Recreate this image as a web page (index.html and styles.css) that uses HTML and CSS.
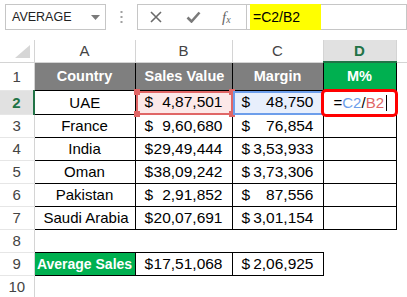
FILE: index.html
```html
<!DOCTYPE html>
<html lang="en">
<head>
    <meta charset="UTF-8">
    <title>AVERAGE - Margin</title>
    <link rel="stylesheet" href="styles.css">
</head>
<body>
    <div class="formula-bar">
        <div class="name-box">
            <span>AVERAGE</span>
            <svg width="9" height="5" viewBox="0 0 9 5"><path d="M0 0h9L4.5 5z" fill="#7a7a7a"/></svg>
        </div>
        <div class="grip">
            <svg width="3" height="12" viewBox="0 0 3 12">
                <rect x="0.5" y="0" width="2" height="2" fill="#a0a0a0"/>
                <rect x="0.5" y="5" width="2" height="2" fill="#a0a0a0"/>
                <rect x="0.5" y="10" width="2" height="2" fill="#a0a0a0"/>
            </svg>
        </div>
        <div class="fx-buttons">
            <svg class="btn-cancel" width="12" height="12" viewBox="0 0 12 12">
                <path d="M1 1l10 10M11 1L1 11" stroke="#6a6a6a" stroke-width="1.6"/>
            </svg>
            <svg class="btn-enter" width="15" height="12" viewBox="0 0 15 12">
                <path d="M1.5 6.5l4 4L13.5 1.5" stroke="#7a7a7a" stroke-width="2.6" fill="none"/>
            </svg>
            <span class="btn-fx"><i>f</i><sub>x</sub></span>
        </div>
        <div class="formula-input">
            <span class="formula">=C2/B2</span>
        </div>
    </div>

    <table class="sheet">
        <colgroup>
            <col class="w-row"><col class="w-a"><col class="w-b"><col class="w-c"><col class="w-d"><col class="w-e">
        </colgroup>
        <thead>
            <tr class="h-head">
                <th class="corner">
                    <svg width="16" height="13" viewBox="0 0 16 13"><path d="M0 13h15V0z" fill="#d6d6d6"/></svg>
                </th>
                <th class="col">A</th>
                <th class="col">B</th>
                <th class="col">C</th>
                <th class="col active">D</th>
                <th class="col"></th>
            </tr>
        </thead>
        <tbody>
            <tr class="h-1">
                <th class="row">1</th>
                <td class="title">Country</td>
                <td class="title">Sales Value</td>
                <td class="title">Margin</td>
                <td class="title green">M%</td>
                <td></td>
            </tr>
            <tr class="h-2">
                <th class="row active">2</th>
                <td class="b center">UAE</td>
                <td class="b ref-red">
                    <div class="acc"><span>$</span><span>4,87,501</span></div>
                    <div class="ref-box red">
                        <span class="handle tl"></span><span class="handle tr"></span>
                        <span class="handle bl"></span><span class="handle br"></span>
                    </div>
                </td>
                <td class="b ref-blue">
                    <div class="acc"><span>$</span><span>48,750</span></div>
                    <div class="ref-box blue"></div>
                </td>
                <td class="b editing">
                    =<span class="c-blue">C2</span>/<span class="c-red">B2</span><span class="caret"></span>
                    <div class="edit-box"></div>
                </td>
                <td></td>
            </tr>
            <tr>
                <th class="row">3</th>
                <td class="b center">France</td>
                <td class="b"><div class="acc"><span>$</span><span>9,60,680</span></div></td>
                <td class="b"><div class="acc"><span>$</span><span>76,854</span></div></td>
                <td class="b"></td>
                <td></td>
            </tr>
            <tr>
                <th class="row">4</th>
                <td class="b center">India</td>
                <td class="b"><div class="acc"><span>$</span><span>29,49,444</span></div></td>
                <td class="b"><div class="acc"><span>$</span><span>3,53,933</span></div></td>
                <td class="b"></td>
                <td></td>
            </tr>
            <tr>
                <th class="row">5</th>
                <td class="b center">Oman</td>
                <td class="b"><div class="acc"><span>$</span><span>38,09,242</span></div></td>
                <td class="b"><div class="acc"><span>$</span><span>3,73,306</span></div></td>
                <td class="b"></td>
                <td></td>
            </tr>
            <tr>
                <th class="row">6</th>
                <td class="b center">Pakistan</td>
                <td class="b"><div class="acc"><span>$</span><span>2,91,852</span></div></td>
                <td class="b"><div class="acc"><span>$</span><span>87,556</span></div></td>
                <td class="b"></td>
                <td></td>
            </tr>
            <tr>
                <th class="row">7</th>
                <td class="b center">Saudi Arabia</td>
                <td class="b"><div class="acc"><span>$</span><span>20,07,691</span></div></td>
                <td class="b"><div class="acc"><span>$</span><span>3,01,154</span></div></td>
                <td class="b"></td>
                <td></td>
            </tr>
            <tr>
                <th class="row">8</th>
                <td></td><td></td><td></td><td></td><td></td>
            </tr>
            <tr>
                <th class="row">9</th>
                <td class="b total">Average Sales</td>
                <td class="b"><div class="acc"><span>$</span><span>17,51,068</span></div></td>
                <td class="b"><div class="acc"><span>$</span><span>2,06,925</span></div></td>
                <td></td>
                <td></td>
            </tr>
            <tr>
                <th class="row">10</th>
                <td></td><td></td><td></td><td></td><td></td>
            </tr>
        </tbody>
    </table>
</body>
</html>
```

FILE: styles.css
```css
:root {
    --line: #c6c6c6;
    --grid-head: #d4d4d4;
    --excel-green: #217346;
    --head-gray: #7f7f7f;
    --fill-green: #00b050;
    --ref-red: #e06666;
    --ref-blue: #6d9eeb;
}

* {
    box-sizing: border-box;
}

body {
    margin: 0;
    background: #fff;
    color: #000;
    font-family: "Liberation Sans", Arial, sans-serif;
    overflow: hidden;
}

/* formula bar */
.formula-bar {
    display: flex;
    height: 26px;
    margin-top: 4px;
    padding-left: 5px;
}

.name-box {
    width: 101px;
    border: 1px solid var(--line);
    display: flex;
    align-items: center;
    justify-content: space-between;
    padding: 0 5px 0 6px;
    font-size: 12.5px;
    color: #222;
}

.grip {
    width: 31px;
    display: flex;
    align-items: center;
    justify-content: center;
}

.fx-buttons {
    width: 110px;
    border: 1px solid var(--line);
    display: flex;
    align-items: center;
    padding-left: 12px;
}

.btn-enter {
    margin-left: 24px;
}

.btn-fx {
    margin-left: 21px;
    font-family: "Liberation Serif", "Times New Roman", serif;
    font-size: 15px;
    color: #666;
}

.btn-fx sub {
    font-size: 10px;
    font-style: italic;
    vertical-align: -1px;
}

.formula-input {
    flex: 1;
    border: 1px solid var(--line);
    border-left: none;
    padding-left: 3px;
    display: flex;
}

.formula {
    width: 71px;
    height: 26px;
    margin-top: -1px;
    padding-left: 3px;
    background: #ffff00;
    font-size: 14px;
    line-height: 26px;
}

/* sheet */
.sheet {
    margin-top: 10px;
    width: 407px;
    table-layout: fixed;
    border-collapse: collapse;
    font-size: 15px;
}

.w-row { width: 34px; }
.w-a { width: 101px; }
.w-b { width: 97px; }
.w-c { width: 91px; }
.w-d { width: 73px; }
.w-e { width: 11px; }

.sheet tr { height: 23px; }
.sheet tr.h-head { height: 22px; }
.sheet tr.h-1 { height: 28px; }
.sheet tr.h-2 { height: 24px; }

.sheet th {
    padding: 0;
    font-weight: normal;
}

.sheet td {
    padding: 0 9px;
    white-space: nowrap;
}

.sheet .corner {
    border-right: 1px solid var(--grid-head);
    border-bottom: 1px solid var(--grid-head);
    text-align: right;
    vertical-align: bottom;
    padding: 0 3px 4px 0;
    line-height: 0;
}

.col {
    border-left: 1px solid var(--grid-head);
    border-right: 1px solid var(--grid-head);
    border-bottom: 1px solid var(--grid-head);
    color: #444;
    text-align: center;
}

.sheet .col.active {
    background: #e1e1e1;
    color: var(--excel-green);
    font-weight: bold;
    border-bottom: 2px solid var(--excel-green);
}

.row {
    border-right: 1px solid var(--grid-head);
    border-bottom: 1px solid #e6e6e6;
    color: #444;
    text-align: center;
}

.sheet .row.active {
    background: #e1e1e1;
    color: var(--excel-green);
    font-weight: bold;
    border-right: 2px solid var(--excel-green);
}

.b {
    border: 1px solid #000;
}

.center {
    text-align: center;
}

.sheet .title {
    border: 1px solid #000;
    background: var(--head-gray);
    color: #fff;
    font-size: 14.5px;
    font-weight: bold;
    text-align: center;
}

.sheet .title.green,
.sheet .total {
    background: var(--fill-green);
}

.sheet .total {
    padding: 0 2px;
    color: #fff;
    font-size: 14px;
    font-weight: bold;
    text-align: center;
}

.acc {
    display: flex;
    justify-content: space-between;
    font-size: 15.5px;
}

/* reference highlights while editing D2 */
.ref-red,
.ref-blue,
.editing {
    position: relative;
}

.ref-red {
    background: #fce8e8;
}

.ref-blue {
    background: #e8effc;
}

.ref-box {
    position: absolute;
    inset: 0 -1px -1px 0;
    border: 2px solid;
}

.ref-box.red {
    border-color: var(--ref-red);
}

.ref-box.blue {
    border-color: var(--ref-blue);
}

.handle {
    position: absolute;
    width: 6px;
    height: 6px;
    background: var(--ref-red);
}

.handle.tl { top: -4px; left: -4px; }
.handle.tr { top: -4px; right: -4px; }
.handle.bl { bottom: -4px; left: -4px; }
.handle.br { bottom: -4px; right: -4px; }

.sheet .editing {
    padding-left: 10px;
}

.c-blue { color: var(--ref-blue); }
.c-red { color: var(--ref-red); }

.caret {
    display: inline-block;
    width: 1px;
    height: 16px;
    margin-left: 2px;
    background: #000;
    vertical-align: -3px;
}

.edit-box {
    position: absolute;
    top: -2px;
    left: -3px;
    right: -2px;
    bottom: -3px;
    border: 3px solid #ff0000;
    border-radius: 5px;
}
```
